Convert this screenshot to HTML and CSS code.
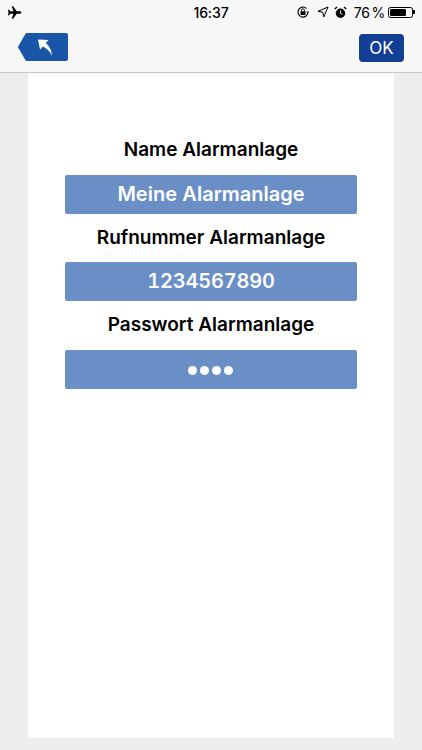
FILE: index.html
```html
<!DOCTYPE html>
<html lang="de">
<head>
<meta charset="utf-8">
<title>Alarmanlage</title>
<link rel="stylesheet" href="styles.css">
</head>
<body>
<header class="top">
  <div class="status">
    <svg class="plane" width="15" height="13" viewBox="0 0 15 13"><path d="M14.4 6.500c0-.8-1-1.200-1.900-1.200H9.700L6.100.2H4.700l1.800 5.100H3.200L2 3.800H.9l.7 2.700L.9 9.200H2l1.200-1.500h3.300L4.700 12.800h1.400l3.600-5.100h2.800c.9 0 1.900-.4 1.900-1.200z" fill="#000"/></svg>
    <span class="time">16:37</span>
    <div class="status-right">
      <svg width="14" height="14" viewBox="0 0 14 14"><path d="M12 7a5 5 0 1 1-1.500-3.500" fill="none" stroke="#000" stroke-width="1.100"/><path d="M12.800 6.500h-2.600l1.300 1.800z" fill="#000"/><rect x="4.500" y="6.300" width="5" height="3.700" rx=".5" fill="#000"/><path d="M5.500 6.500V5.400a1.500 1.500 0 0 1 3 0v1.100" fill="none" stroke="#000"/></svg>
      <svg class="gap-loc" width="12" height="12" viewBox="0 0 12 12"><path d="M11 1 1 5.300l4.800.9.900 4.800z" fill="none" stroke="#000" stroke-width="1"/></svg>
      <svg class="gap-alarm" width="13" height="13" viewBox="0 0 13 13"><circle cx="6.500" cy="7.300" r="4.700" fill="#000"/><path d="M6.500 4.500v3l2 .8" fill="none" stroke="#fff" stroke-width=".9"/><path d="M.8 3 3 1M12.200 3 10 1" stroke="#000" stroke-width="1.300"/></svg>
      <span class="pct">76 %</span>
      <div class="battery"><div class="battery-fill"></div></div><div class="battery-tip"></div>
    </div>
  </div>
  <div class="nav">
    <button class="back" aria-label="Zurück">
      <svg width="50" height="28" viewBox="0 0 50 28"><path d="M9 0h39a2 2 0 0 1 2 2v24a2 2 0 0 1-2 2H9a2 2 0 0 1-1.500-.700L.6 15.300a2 2 0 0 1 0-2.600L7.500.7A2 2 0 0 1 9 0z" fill="#1a56a8"/><path d="M20 6.500 30.500 7 27.800 10C31.500 13 33.500 17 34 23 32 18 29 15.500 25 13.500L22 16.500z" fill="#fff"/></svg>
    </button>
    <button class="ok">OK</button>
  </div>
</header>
<main class="card">
  <h2 class="label">Name Alarmanlage</h2>
  <div class="field">Meine Alarmanlage</div>
  <h2 class="label">Rufnummer Alarmanlage</h2>
  <div class="field digits">1234567890</div>
  <h2 class="label">Passwort Alarmanlage</h2>
  <div class="field dots"><i></i><i></i><i></i><i></i></div>
</main>
</body>
</html>
```
FILE: styles.css
```css
* { box-sizing: border-box; }
html, body { margin: 0; height: 100%; }
body {
  width: 422px;
  height: 750px;
  overflow: hidden;
  background: #eeeeee;
  font-family: Inter, "Liberation Sans", sans-serif;
  color: #000;
}
.top {
  height: 73px;
  background: #f7f7f7;
  border-bottom: 1px solid #c8c8c8;
}
.status {
  height: 24px;
  padding: 0 7px;
  display: grid;
  grid-template-columns: 1fr auto 1fr;
  align-items: center;
}
.plane { display: block; }
.time { font-size: 14px; font-weight: 500; letter-spacing: -.1px; }
.status-right {
  display: flex;
  align-items: center;
  justify-content: flex-end;
}
.gap-loc { margin-left: 7px; }
.gap-alarm { margin-left: 5px; }
.pct { margin-left: 7px; font-size: 14px; word-spacing: -2px; letter-spacing: -.2px; }
.battery {
  width: 25px;
  height: 11px;
  margin-left: 3px;
  padding: 1px;
  border: 1px solid #000;
  border-radius: 2.500px;
}
.battery-fill { width: 76%; height: 100%; background: #000; border-radius: 1px; }
.battery-tip { width: 2px; height: 4px; background: #000; border-radius: 0 1px 1px 0; }
.nav {
  display: flex;
  justify-content: space-between;
  align-items: flex-start;
  padding: 9px 18px 0;
}
.back, .ok { border: 0; padding: 0; margin: 0; display: block; }
.back { width: 50px; height: 28px; background: none; }
.back svg { display: block; }
.ok {
  width: 45px;
  height: 28px;
  margin-top: 1px;
  background: #123f94;
  border-radius: 4px;
  color: #fff;
  font: 400 17px Inter, "Liberation Sans", sans-serif;
}
.card {
  width: 366px;
  height: 665px;
  margin-left: 28px;
  padding: 65.400px 37px 0;
  background: #fff;
}
.label {
  margin: 0;
  height: 23px;
  line-height: 23px;
  font-size: 19px;
  font-weight: 600;
  text-align: center;
  white-space: nowrap;
}
.field {
  height: 39px;
  margin: 13.500px 0 12px;
  background: #6a8ec6;
  border-radius: 2px;
  color: #fff;
  font-size: 20px;
  font-weight: 600;
  font-variant-numeric: tabular-nums;
  line-height: 39px;
  text-align: center;
}
.digits { letter-spacing: -.2px; }
.dots {
  display: flex;
  justify-content: center;
  align-items: center;
  gap: 3px;
  padding: 2px 1px 0 0;
}
.dots i { width: 9px; height: 9px; border-radius: 50%; background: #fff; }
```
